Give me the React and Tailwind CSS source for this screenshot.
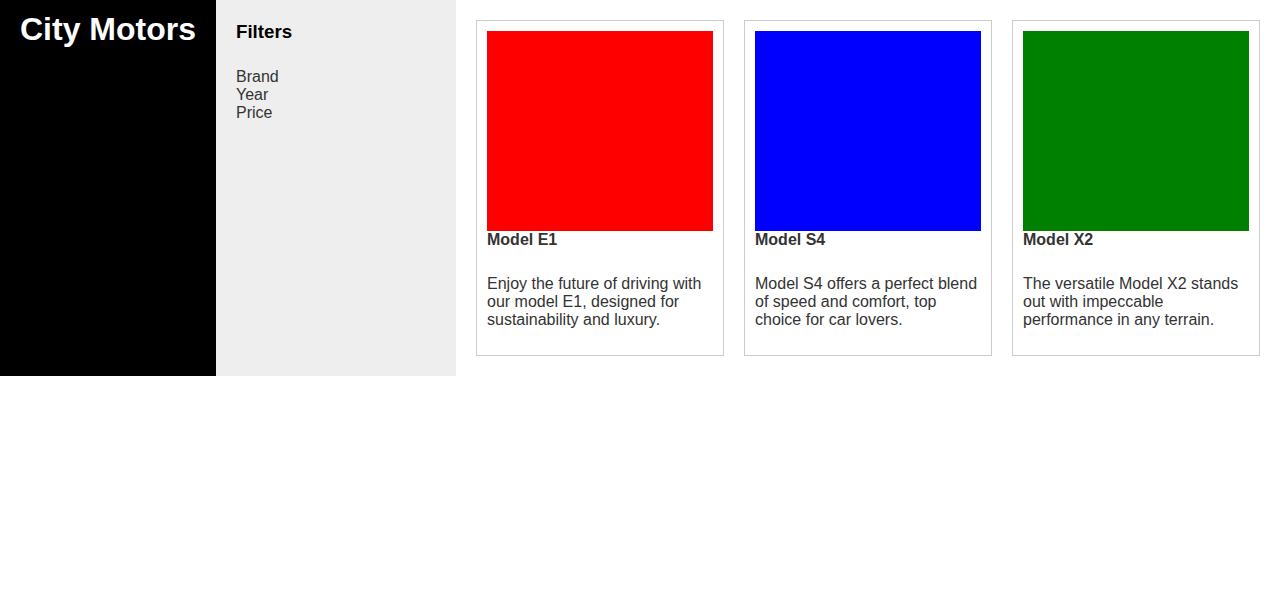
import React from "react";

const cars = [
  { name: "Model E1", color: "bg-[#ff0000]", desc: "Enjoy the future of driving with our model E1, designed for sustainability and luxury." },
  { name: "Model S4", color: "bg-[#0000ff]", desc: "Model S4 offers a perfect blend of speed and comfort, top choice for car lovers." },
  { name: "Model X2", color: "bg-[#008000]", desc: "The versatile Model X2 stands out with impeccable performance in any terrain." },
];

export default function App() {
  return (
    <div className="flex items-stretch text-[16px] leading-[18px] text-[#333]" style={{ fontFamily: '"Liberation Sans", Arial, sans-serif' }}>
      <div className="w-[216px] shrink-0 bg-black px-[20px] pt-[11px]">
        <h1 className="text-[32px] leading-[37px] font-bold text-white whitespace-nowrap">City Motors</h1>
      </div>
      <div className="w-[240px] shrink-0 bg-[#eeeeee] px-[20px] pt-[21px]">
        <h2 className="text-[18.72px] leading-[22px] font-bold text-black">Filters</h2>
        <ul className="mt-[25px]">
          <li>Brand</li>
          <li>Year</li>
          <li>Price</li>
        </ul>
      </div>
      <div className="flex items-start gap-[20px] p-[20px]">
        {cars.map((c) => (
          <div key={c.name} className="w-[248px] border border-[#cccccc] p-[10px]">
            <div className={`h-[200px] w-[226px] ${c.color}`} />
            <h3 className="font-bold">{c.name}</h3>
            <p className="mt-[26px] mb-[16px]">{c.desc}</p>
          </div>
        ))}
      </div>
    </div>
  );
}
